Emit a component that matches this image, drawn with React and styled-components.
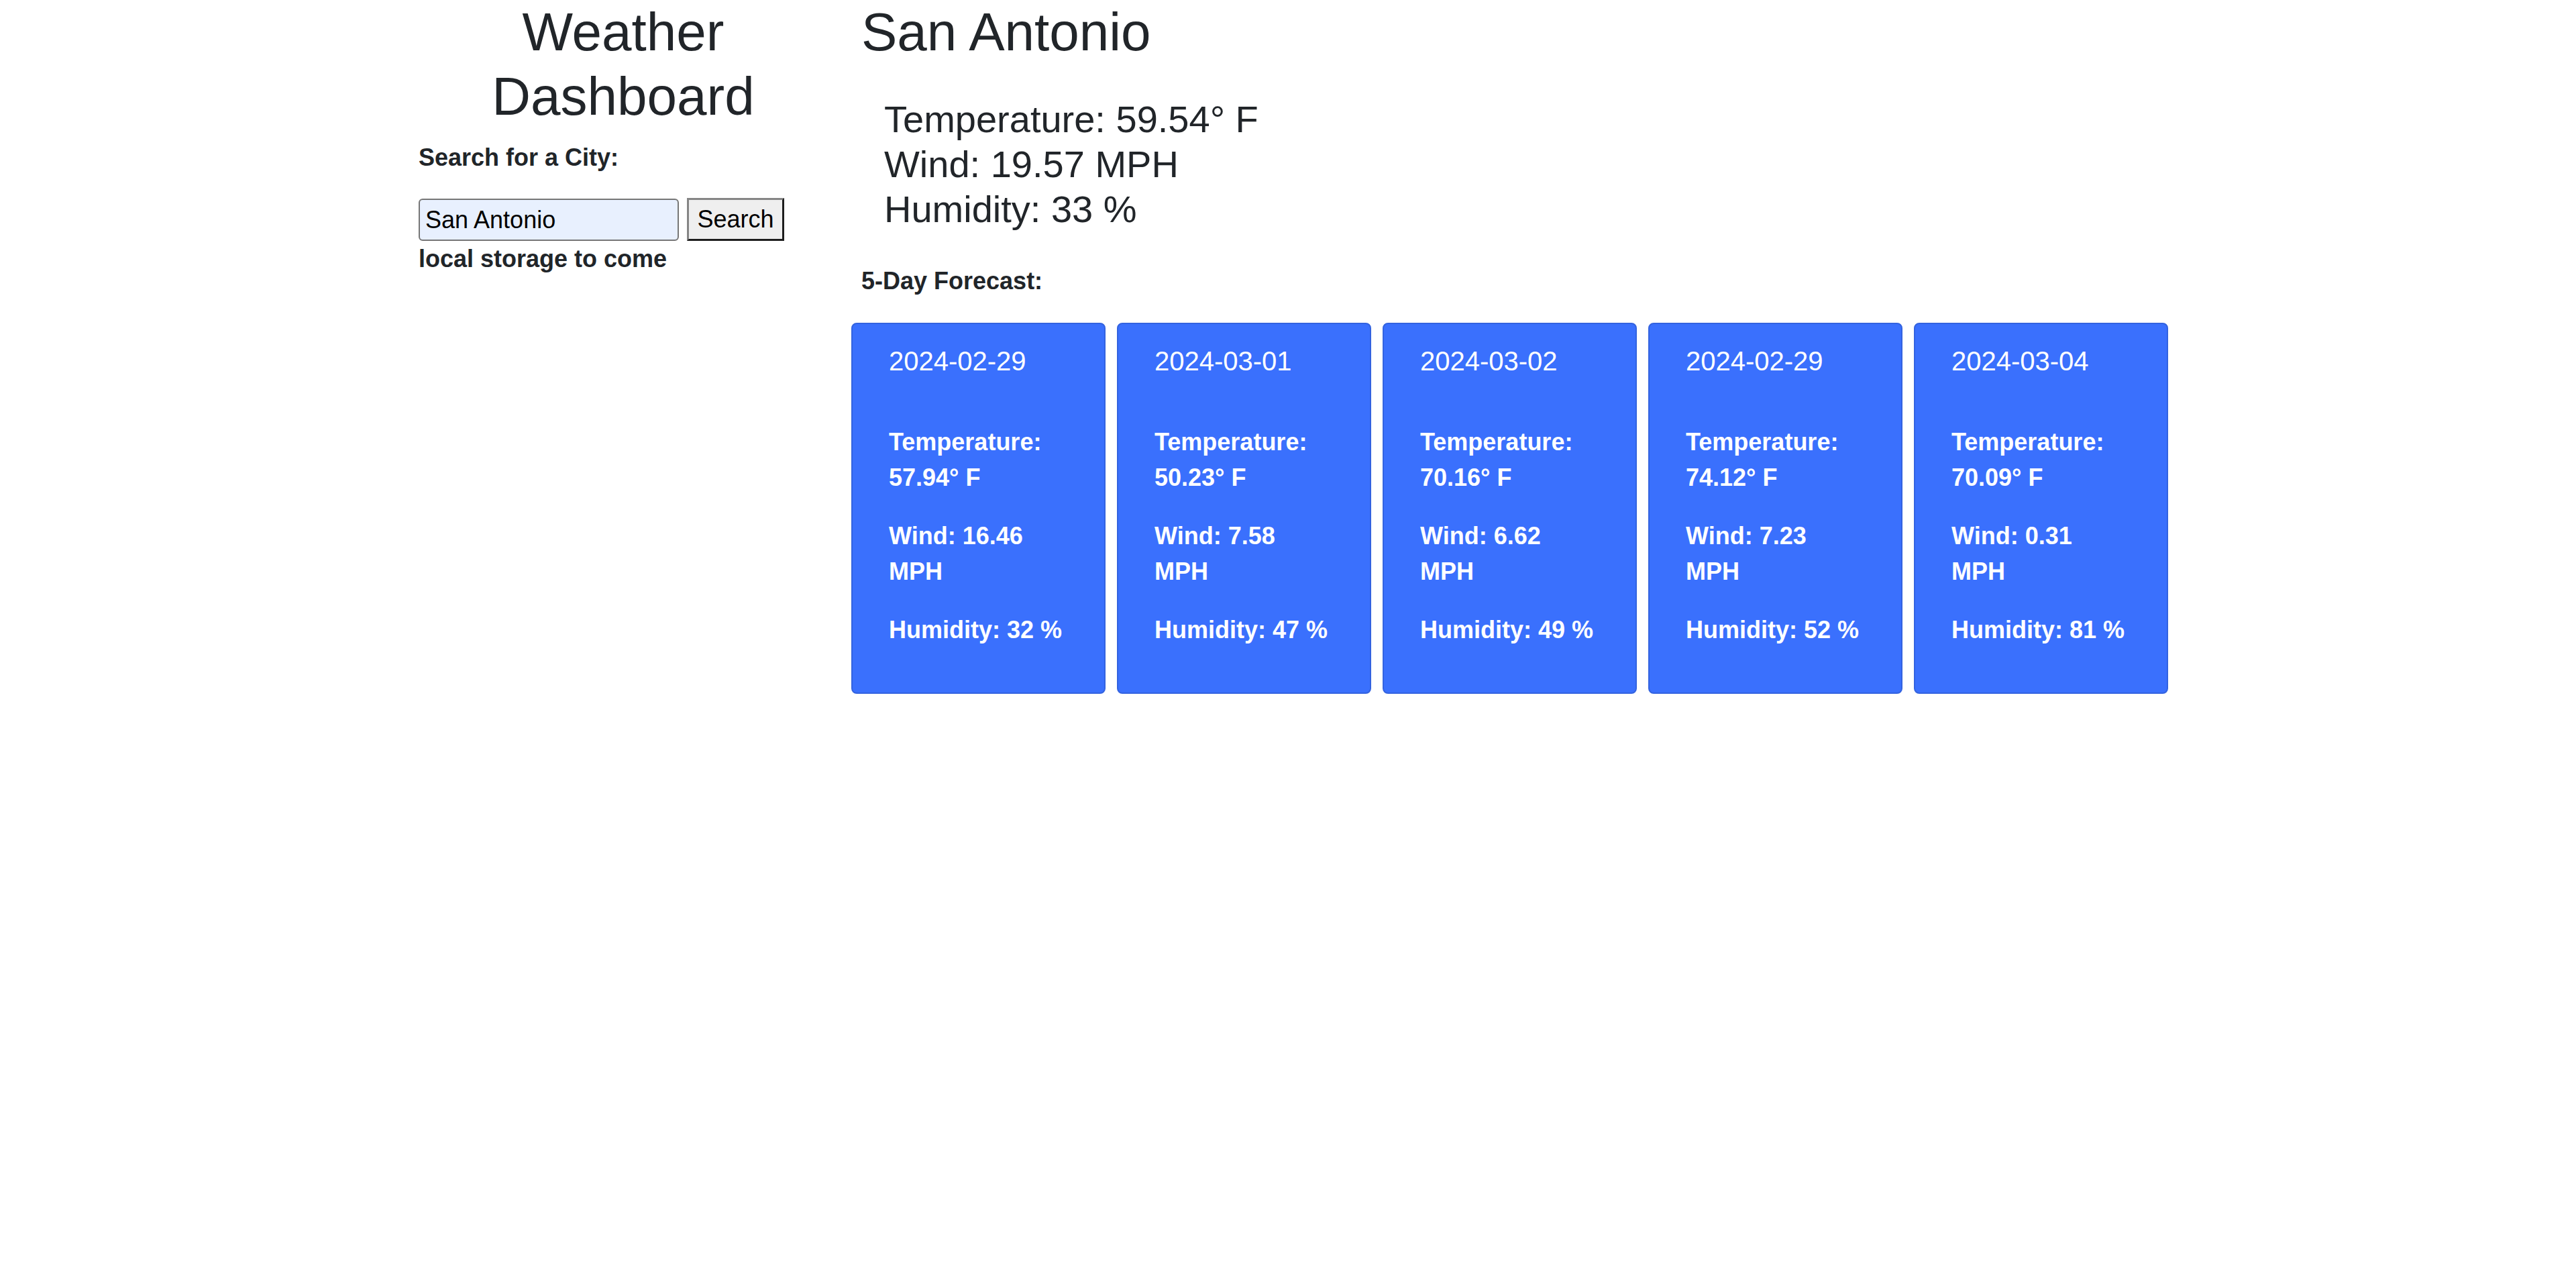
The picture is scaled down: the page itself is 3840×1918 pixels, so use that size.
import React from "react";
import styled, { createGlobalStyle } from "styled-components";

const GlobalStyle = createGlobalStyle`
  html, body {
    margin: 0;
    padding: 0;
    background: #ffffff;
  }
  body {
    font-family: "Liberation Sans", Arial, Helvetica, sans-serif;
    color: #212529;
    font-size: 36px;
    line-height: 1.5;
  }
  * { box-sizing: border-box; }
`;

const Container = styled.div`
  width: 2640px;
  margin: 0 auto;
  padding: 0 24px;
  display: flex;
  align-items: flex-start;
`;

const Sidebar = styled.aside`
  flex: 0 0 610px;
  display: flex;
  flex-direction: column;
`;

const Title = styled.h1`
  margin: 0 0 16px;
  font-size: 80px;
  font-weight: 400;
  line-height: 96px;
  text-align: center;
`;

const Label = styled.label`
  display: block;
  font-weight: 700;
  font-size: 36px;
  line-height: 54px;
  margin-bottom: 33px;
`;

const SearchRow = styled.form`
  display: flex;
  align-items: flex-start;
  gap: 12px;
`;

const CityInput = styled.input`
  width: 388px;
  height: 63px;
  margin-top: 1px;
  padding: 0 8px;
  border: 2px solid #767676;
  border-radius: 6px;
  background: #e8f0fe;
  font-family: "Liberation Sans", Arial, sans-serif;
  font-size: 36px;
  color: #000;
  outline: none;
`;

const SearchButton = styled.button`
  height: 64px;
  width: 145px;
  padding: 0;
  border-style: solid;
  border-width: 3px;
  border-color: #858585 #1e1e1e #1e1e1e #858585;
  background: #efefef;
  font-family: "Liberation Sans", Arial, sans-serif;
  font-size: 36px;
  color: #000;
`;

const Note = styled.div`
  font-weight: 700;
  font-size: 36px;
  line-height: 54px;
`;

const Main = styled.main`
  flex: 1;
  margin-left: 35px;
  display: flex;
  flex-direction: column;
`;

const CityName = styled.h2`
  margin: 0 0 48px 15px;
  font-size: 80px;
  font-weight: 400;
  line-height: 96px;
`;

const Stats = styled.div`
  padding-left: 49px;
  margin-bottom: 47px;
`;

const StatLine = styled.div`
  font-size: 56px;
  line-height: 67px;
`;

const SectionHeading = styled.h3`
  margin: 0 0 35px 15px;
  font-size: 36px;
  font-weight: 700;
  line-height: 54px;
`;

const CardGrid = styled.div`
  display: grid;
  grid-template-columns: repeat(5, 379px);
  column-gap: 17px;
`;

const Card = styled.div`
  height: 553px;
  background: #3a70fd;
  border: 2px solid #3363e0;
  border-radius: 8px;
  color: #ffffff;
  padding: 31px 60px 0 54px;
`;

const CardDate = styled.h5`
  margin: 0 0 70px;
  font-size: 40px;
  font-weight: 400;
  line-height: 48px;
`;

const CardText = styled.p`
  margin: 0 0 34px;
  font-size: 36px;
  font-weight: 700;
  line-height: 53px;
`;

const current = {
  city: "San Antonio",
  temp: "59.54",
  wind: "19.57",
  humidity: "33",
};

const forecast = [
  { date: "2024-02-29", temp: "57.94", wind: "16.46", humidity: "32" },
  { date: "2024-03-01", temp: "50.23", wind: "7.58", humidity: "47" },
  { date: "2024-03-02", temp: "70.16", wind: "6.62", humidity: "49" },
  { date: "2024-02-29", temp: "74.12", wind: "7.23", humidity: "52" },
  { date: "2024-03-04", temp: "70.09", wind: "0.31", humidity: "81" },
];

export default function App() {
  return (
    <>
      <GlobalStyle />
      <Container>
        <Sidebar>
          <Title>Weather Dashboard</Title>
          <Label htmlFor="city">Search for a City:</Label>
          <SearchRow onSubmit={(e) => e.preventDefault()}>
            <CityInput id="city" type="text" defaultValue="San Antonio" />
            <SearchButton type="submit">Search</SearchButton>
          </SearchRow>
          <Note>local storage to come</Note>
        </Sidebar>
        <Main>
          <CityName>{current.city}</CityName>
          <Stats>
            <StatLine>Temperature: {current.temp}° F</StatLine>
            <StatLine>Wind: {current.wind} MPH</StatLine>
            <StatLine>Humidity: {current.humidity} %</StatLine>
          </Stats>
          <SectionHeading>5-Day Forecast:</SectionHeading>
          <CardGrid>
            {forecast.map((d, i) => (
              <Card key={i}>
                <CardDate>{d.date}</CardDate>
                <CardText>Temperature: {d.temp}° F</CardText>
                <CardText>Wind: {d.wind} MPH</CardText>
                <CardText>Humidity: {d.humidity} %</CardText>
              </Card>
            ))}
          </CardGrid>
        </Main>
      </Container>
    </>
  );
}
